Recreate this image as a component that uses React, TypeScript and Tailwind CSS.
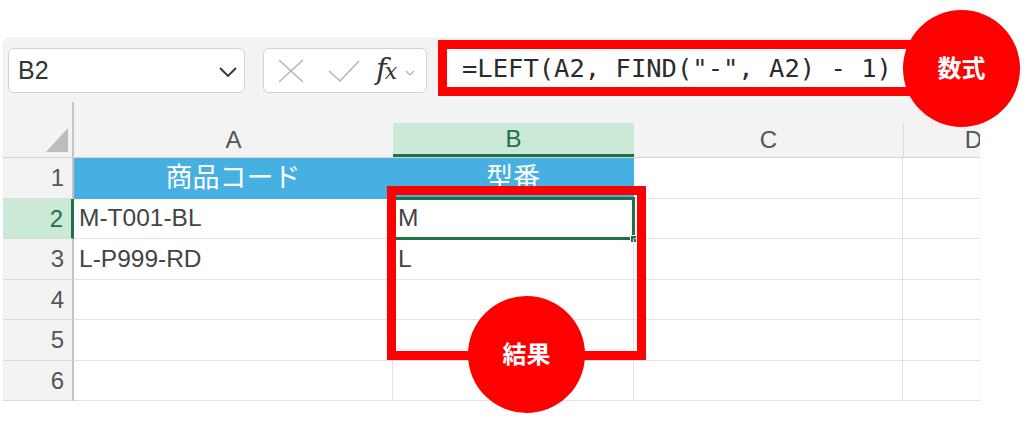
import React from 'react';

const rowHeights = [41, 40, 41, 40, 41, 40];

const cols = [
  { key: 'A', w: 'w-[319px]' },
  { key: 'B', w: 'w-[241px]' },
  { key: 'C', w: 'w-[269px]' },
  { key: 'D', w: 'w-[77px]' },
];

const data: Record<number, Record<string, string>> = {
  2: { A: 'M-T001-BL', B: 'M' },
  3: { A: 'L-P999-RD', B: 'L' },
};

const App: React.FC = () => {
  return (
    <div
      className="relative w-[1024px] h-[439px] overflow-hidden bg-white"
      style={{ fontFamily: '"Liberation Sans", "Noto Sans CJK JP", sans-serif' }}
    >
      <div className="pt-[39px]">
        <div className="ml-[3px] w-[977px] bg-[#f3f3f3] rounded-tl-md shadow-[0_-1px_2px_rgba(0,0,0,0.08)]">
          {/* Toolbar */}
          <div className="h-[63px] flex items-start">
            <div className="mt-[9px] ml-[5px] w-[237px] h-[45px] bg-white border border-[#d2d2d2] rounded-md flex items-center justify-between pl-[9px] pr-[6px]">
              <span className="text-[25px] text-[#333]">B2</span>
              <svg width="20" height="12" viewBox="0 0 20 12" className="mt-[2px]">
                <path d="M2 2 L10 10 L18 2" fill="none" stroke="#333" strokeWidth="1.8" />
              </svg>
            </div>
            <div className="mt-[9px] ml-[18px] w-[164px] h-[45px] bg-white border border-[#d2d2d2] rounded-md flex items-center pl-[14px]">
              <svg width="26" height="24" viewBox="0 0 26 24">
                <path d="M1 1 L25 23 M25 1 L1 23" fill="none" stroke="#b5b5b5" strokeWidth="1.6" />
              </svg>
              <svg width="32" height="24" viewBox="0 0 32 24" className="ml-[24px]">
                <path d="M1 12 L12 22 L31 2" fill="none" stroke="#b5b5b5" strokeWidth="1.6" />
              </svg>
              <span
                className="ml-[16px] text-[29px] italic text-[#333] leading-none -mt-[2px]"
                style={{ fontFamily: '"DejaVu Serif", serif' }}
              >
                f<span className="text-[22px] -ml-[2px]">x</span>
              </span>
              <svg width="10" height="6" viewBox="0 0 10 6" className="ml-[8px] mt-[4px]">
                <path d="M1 1 L5 5 L9 1" fill="none" stroke="#b0b0b0" strokeWidth="1.2" />
              </svg>
            </div>
            <div className="mt-[1px] ml-[11px] w-[477px] h-[56px] border-[9px] border-[#ff0000] bg-white pl-[15px]">
              <span
                className="text-[25.5px] leading-[38px] text-[#2b2b2b] whitespace-pre"
                style={{ fontFamily: '"DejaVu Sans Mono", monospace' }}
              >
                =LEFT(A2, FIND("-", A2) - 1)
              </span>
            </div>
          </div>

          {/* Column header */}
          <div className="h-[56px] flex border-b border-[#d4d4d4]">
            <div className="w-[71px] border-r-2 border-[#c4c4c4] flex items-end justify-end pr-[4px] pb-[5px]">
              <svg width="22" height="24" viewBox="0 0 22 24">
                <path d="M22 0 L22 24 L0 24 Z" fill="#bdbdbd" />
              </svg>
            </div>
            {cols.map((c) => (
              <div key={c.key} className={`${c.w} pt-[21px] overflow-hidden`}>
                {c.key === 'B' ? (
                  <div className="h-[34px] bg-[#cae9d6] border-b-[3px] border-[#1e7145] flex items-center justify-center text-[24px] text-[#1e7145]">
                    B
                  </div>
                ) : c.key === 'D' ? (
                  <div className="h-[34px] w-[140px] border-l border-[#dcdcdc] flex items-center justify-center text-[24px] text-[#555]">
                    D
                  </div>
                ) : (
                  <div className="h-[34px] flex items-center justify-center text-[24px] text-[#555]">
                    {c.key}
                  </div>
                )}
              </div>
            ))}
          </div>

          {/* Rows */}
          {rowHeights.map((h, i) => {
            const r = i + 1;
            const sel = r === 2;
            return (
              <div key={r} className="flex bg-white" style={{ height: h }}>
                <div
                  className={`w-[71px] flex items-center justify-end pr-[8px] text-[24px] border-b ${
                    sel
                      ? 'bg-[#cae9d6] text-[#1e7145] border-r-[3px] border-r-[#1e7145] border-b-[#cfe3d6]'
                      : 'bg-[#f3f3f3] text-[#555] border-r-2 border-r-[#c4c4c4] border-b-[#dcdcdc]'
                  }`}
                >
                  {r}
                </div>
                {cols.map((c) => {
                  const header = r === 1 && (c.key === 'A' || c.key === 'B');
                  const txt = r === 1 ? (c.key === 'A' ? '商品コード' : c.key === 'B' ? '型番' : '') : data[r]?.[c.key] ?? '';
                  return (
                    <div
                      key={c.key}
                      className={`${c.w} relative flex items-center border-b border-r border-[#e2e2e2] ${
                        c.key === 'D' ? 'border-r-0' : ''
                      } ${
                        header ? 'bg-[#45b0e1] justify-center text-white text-[27px] border-r-[#45b0e1] border-b-[#45b0e1]' : 'pl-[5px] text-[24.5px] text-[#444]'
                      }`}
                    >
                      {txt}
                      {sel && c.key === 'B' && (
                        <div className="absolute -left-[1px] -top-[2px] -right-[2px] -bottom-[2px] border-[3px] border-[#1e7145]">
                          <div className="absolute -right-[5px] -bottom-[6px] w-[7px] h-[8px] bg-[#1e7145] border border-white" />
                        </div>
                      )}
                    </div>
                  );
                })}
              </div>
            );
          })}
        </div>
      </div>

      {/* Annotations */}
      <div className="absolute left-[387px] top-[186px] w-[259px] h-[174px] border-[9px] border-[#ff0000]" />
      <div className="absolute left-[468px] top-[296px] w-[117px] h-[117px] rounded-full bg-[#ff0000] flex items-center justify-center text-white text-[24px] font-bold">
        結果
      </div>
      <div className="absolute left-[903px] top-[10px] w-[117px] h-[117px] rounded-full bg-[#ff0000] flex items-center justify-center text-white text-[24px] font-bold">
        数式
      </div>
    </div>
  );
};

export default App;
